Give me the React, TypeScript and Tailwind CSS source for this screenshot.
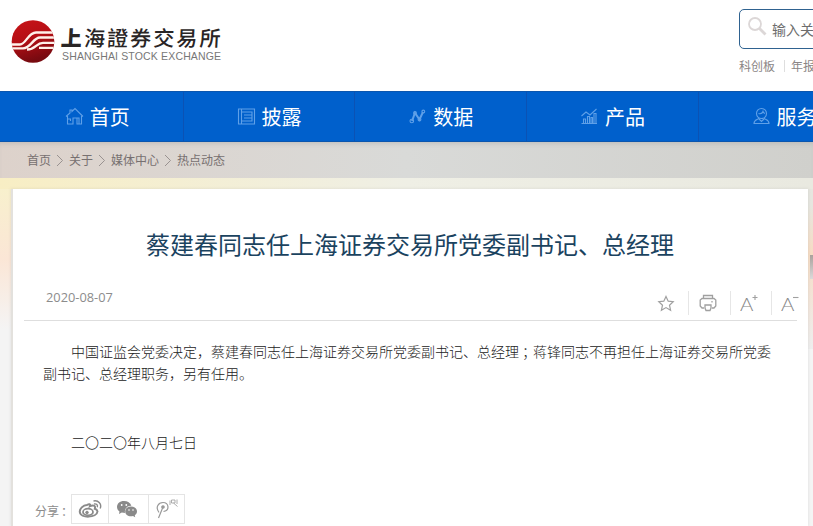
import type { ReactNode } from 'react'

const NAV_ITEMS: { id: string; label: string; icon: ReactNode }[] = [
  {
    id: 'home',
    label: '首页',
    icon: (
      <path d="M1 9.5 L5 6 V3 H7 V4.5 L10 1.5 L18 9.5 M2.5 9 V17 H8 V11 H12 V17 H16.5 V9 M2.5 12 H5.5 V14 M12 11 H14 V17" />
    ),
  },
  {
    id: 'disclosure',
    label: '披露',
    icon: (
      <path d="M1.5 2 H17.5 V17 H1.5 Z M4.5 2 V17 M4.5 5 H15 V14 H4.5 M7 8 H15 M7 11 H15" />
    ),
  },
  {
    id: 'data',
    label: '数据',
    icon: (
      <>
        <path d="M4 14 L7 6 L11.5 12.5 L15 5" strokeWidth="2" />
        <circle cx="3.8" cy="14" r="1.8" />
        <circle cx="7" cy="6" r="1.4" />
        <circle cx="11.5" cy="12.5" r="1.4" />
        <circle cx="15.3" cy="4.5" r="1.4" />
      </>
    ),
  },
  {
    id: 'product',
    label: '产品',
    icon: (
      <path d="M1.5 9 L6 5 L10 8 L16.5 2 M1.5 16.5 H17 M3.5 16 V12 H5.5 V16 M7.5 16 V9.5 H9.5 V16 M11 16 V10.5 H12.5 V16 M14 16 V6.5 H16 V16" />
    ),
  },
  {
    id: 'service',
    label: '服务',
    icon: (
      <>
        <circle cx="9.5" cy="6.5" r="5" />
        <path d="M6.5 6.5 C8.5 7 10.5 6 11 4.5 C11.5 6 12 6.3 13 6.5" />
        <path d="M7 11 C6 13 2 12.5 2 16.5 H17 C17 12.5 13 13 12 11 M7 12 L9.5 14.5 L12 12" />
      </>
    ),
  },
]

const CRUMBS = ['首页', '关于', '媒体中心', '热点动态']

function Logo() {
  return (
    <div className="flex pt-[19px] pl-[11px]">
      <svg width="44" height="45" viewBox="0 0 44 45">
        <defs>
          <linearGradient id="ball" x1="0" y1="0" x2="0.3" y2="1">
            <stop offset="0" stopColor="#c81418" />
            <stop offset="0.5" stopColor="#b50f15" />
            <stop offset="1" stopColor="#780a10" />
          </linearGradient>
          <clipPath id="ballClip">
            <circle cx="22" cy="22.5" r="21.3" />
          </clipPath>
        </defs>
        <circle cx="22" cy="22.5" r="21.3" fill="url(#ball)" />
        <g clipPath="url(#ballClip)" fill="none" stroke="#fff1ea" strokeWidth="2.3">
          <path d="M0 25.5 H9 C15 25.5 17 13.5 25 13.5 H44" />
          <path d="M0 29.3 H12 C20 29.3 22 18.5 29 18.5 H44" />
          <path d="M16 30.5 C25 30.5 25 23.8 32 23.8 H44" />
          <path d="M28 28.8 H44" />
        </g>
      </svg>
      <div className="ml-[6px] pt-[5px]">
        <div
          lang="zh-Hant"
          className="-skew-x-3 font-['Noto_Sans_CJK_TC',sans-serif] text-[21px] leading-[26px] font-medium tracking-[2.1px] whitespace-nowrap text-[#292525]"
        >
          <span className="font-black">上</span>海證券交易所
        </div>
        <div className="ml-px font-['Liberation_Sans',sans-serif] text-[10.5px] leading-[13px] tracking-[0.16px] whitespace-nowrap text-[#777]">
          SHANGHAI STOCK EXCHANGE
        </div>
      </div>
    </div>
  )
}

function Header() {
  return (
    <header className="flex h-[91px] justify-between bg-white">
      <Logo />
      <div className="w-[74px] shrink-0 overflow-hidden pt-[9px]">
        <div className="flex h-10 w-[220px] items-center rounded-[5px] border border-[#2f6290] pl-[7px]">
          <svg width="21" height="22" viewBox="0 0 21 22" className="mb-1" fill="none" stroke="#dcd7d7">
            <circle cx="8" cy="8" r="6" strokeWidth="1.8" />
            <path d="M12.5 12.5 L18.5 18.5" strokeWidth="2.8" />
          </svg>
          <span className="ml-1 text-sm whitespace-nowrap text-[#6d6d6d]">输入关键字</span>
        </div>
        <div className="mt-2 flex h-[18px] w-[200px] items-center text-xs text-[#8c8686]">
          <span>科创板</span>
          <span className="mr-[6px] ml-[9px] h-3 w-px bg-[#dedede]" />
          <span>年报</span>
        </div>
      </div>
    </header>
  )
}

function NavBar() {
  return (
    <nav className="flex h-[51px] overflow-hidden border-y border-[#0b56ae] bg-[#0060cc] pl-[12px]">
      {NAV_ITEMS.map((item) => (
        <a
          key={item.id}
          className="flex w-[171.7px] shrink-0 items-center justify-center gap-[6px] border-r border-[#0b52b4] text-xl text-white"
        >
          <svg width="19" height="19" viewBox="0 0 19 19" fill="none" stroke="#5fa0e8" strokeWidth="1.1">
            {item.icon}
          </svg>
          <span className="pt-px">{item.label}</span>
        </a>
      ))}
    </nav>
  )
}

function Breadcrumb() {
  return (
    <div className="flex h-9 items-center bg-linear-to-r from-[#ddd2cb] via-[#d9dad8] to-[#d0d0cc] pl-[27px] text-xs text-[#777070] shadow-[inset_0_4px_5px_-3px_#aaa9]">
      {CRUMBS.map((crumb, i) => (
        <span key={crumb} className="flex items-center">
          {i > 0 && (
            <svg width="8" height="13" viewBox="0 0 8 13" className="mx-[5px]" fill="none" stroke="#999290">
              <path d="M1 1 L6.5 6.5 L1 12" />
            </svg>
          )}
          {crumb}
        </span>
      ))}
    </div>
  )
}

function FontSizeIcon({ sign }: { sign: string }) {
  return (
    <span className="relative flex h-[18px] w-[18px] items-end">
      <span className="origin-left scale-x-120 font-['Lato',sans-serif] text-[17px] leading-[15px] font-light text-[#858585]">
        A
      </span>
      <svg
        width="18"
        height="18"
        viewBox="0 0 18 18"
        className="absolute inset-0"
        fill="none"
        stroke="currentColor"
        strokeWidth="1.1"
      >
        <path d={sign} />
      </svg>
    </span>
  )
}

function ArticleTools() {
  return (
    <div className="flex items-center text-[#a0a0a0]">
      <svg width="18" height="17" viewBox="0 0 18 17" fill="none" stroke="currentColor" strokeWidth="1.2">
        <path d="M9 1.5 L11.2 6.2 L16.2 6.7 L12.5 10.2 L13.6 15.3 L9 12.6 L4.4 15.3 L5.5 10.2 L1.8 6.7 L6.8 6.2 Z" />
      </svg>
      <span className="mr-[10px] ml-[13px] h-6 w-px bg-[#e6e6e6]" />
      <svg width="18" height="18" viewBox="0 0 18 18" fill="none" stroke="currentColor" strokeWidth="1.3">
        <path d="M4.5 4.5 V1.5 H13.5 V4.5 M5 14 H3 L1.2 12 V6 L3 4.5 H15 L16.8 6 V12 L15 14 H13 M13 7 V8.5" />
        <path d="M6 11 H12 V14 L11 16.5 H7 L6 14 Z" />
      </svg>
      <span className="mr-[9px] ml-[13px] h-6 w-px bg-[#e6e6e6]" />
      <FontSizeIcon sign="M15 1 V6 M12.5 3.5 H17.5" />
      <span className="mr-[9px] ml-[13px] h-6 w-px bg-[#e6e6e6]" />
      <FontSizeIcon sign="M12 3.5 H17.5" />
    </div>
  )
}

function ShareBar() {
  return (
    <div className="flex items-end pl-[22px]">
      <span className="pb-[5px] text-xs text-[#8c8c8c]">
        分享<span className="relative left-[2px]">：</span>
      </span>
      <div className="flex h-[30px] divide-x divide-[#e4e4e4] border border-[#e4e4e4]">
        <span className="flex w-[37px] items-center justify-center">
          <svg width="24" height="20" viewBox="0 0 24 20" fill="none" stroke="#8a8a8a">
            <path
              d="M9 6 C5 6 1.5 10 1.8 13 C2.2 19.5 19 19 19.5 12.5 C19.5 10.8 18 10.2 16.8 9.8 C18 6 14.5 6 12 7.2 C12.8 5 11 4.8 9 6 Z"
              strokeWidth="2"
            />
            <ellipse cx="10" cy="13" rx="5" ry="3.3" strokeWidth="1.8" />
            <circle cx="9" cy="13.5" r="1.3" fill="#8a8a8a" />
            <path d="M16 5 C18.5 4.5 20 6 19.3 8.3" strokeWidth="1.4" />
            <path d="M15.5 2 C20.5 1 24 5 22.2 9.5" strokeWidth="1.4" />
          </svg>
        </span>
        <span className="flex w-[40px] items-center justify-center pr-1">
          <svg width="22" height="19" viewBox="0 0 22 19" fill="#8a8a8a">
            <path d="M8 1 C3.7 1 1 3.6 1 7 C1 9 2 10.5 3.5 11.6 L3 14 L5.8 12.6 L9 13 C8 8 12 5.5 15.4 5.7 C14.5 2.7 11.5 1 8 1 Z" />
            <path d="M15 6.5 C11.5 6.5 9.2 8.7 9.2 11.4 C9.2 15 13 17.1 17 16 L19.2 17.3 L18.8 15.1 C20.3 14.1 21 12.8 21 11.4 C21 8.7 18.5 6.5 15 6.5 Z" />
            <g fill="#fff">
              <circle cx="5.7" cy="5" r="0.9" />
              <circle cx="10.3" cy="5" r="0.9" />
              <circle cx="13" cy="10" r="0.8" />
              <circle cx="17" cy="10" r="0.8" />
            </g>
          </svg>
        </span>
        <span className="flex w-[35px] items-center justify-center">
          <svg width="24" height="22" viewBox="0 0 24 22" fill="none" stroke="#999" strokeWidth="1.2">
            <path d="M4 14.5 C0 9 3.5 4.5 8 4.5 C14 4.5 15 12.5 8.5 13.5 M8 9 L3.5 20" />
            <circle cx="8" cy="9" r="1.2" fill="#999" />
            <path d="M15 2.5 V7 M16.5 2 H20 V5 H16.5 Z M22 1.5 V6 M18.5 5 L22.5 8.5" strokeWidth="0.8" />
          </svg>
        </span>
      </div>
    </div>
  )
}

function Article() {
  return (
    <article className="flex h-[337px] w-[797px] flex-col border-x-2 border-[#e3e1dd] border-r-white bg-white shadow-[0_0_3px_#8883]">
      <h1 className="mt-[37px] ml-[133px] text-2xl leading-9 whitespace-nowrap text-[#1b435f]">
        蔡建春同志任上海证券交易所党委副书记、总经理
      </h1>
      <div className="mr-[9px] ml-[11px] flex h-[59px] justify-between border-b border-[#dedede]">
        <time className="mt-[25px] ml-[22px] font-['Open_Sans',sans-serif] text-[12.8px] leading-5 text-[#8c8c8c]">
          2020-08-07
        </time>
        <div className="-mr-[2px] pt-[29px]">
          <ArticleTools />
        </div>
      </div>
      <div className="mt-[19px] ml-[30px] w-[730px] text-sm leading-[22px] font-light text-[#222]">
        <p className="indent-[28px]">
          中国证监会党委决定，蔡建春同志任上海证券交易所党委副书记、总经理
          <span className="relative left-[3px]">；</span>
          蒋锋同志不再担任上海证券交易所党委副书记、总经理职务，另有任用。
        </p>
        <p className="mt-[47px] indent-[28px]">二〇二〇年八月七日</p>
      </div>
      <div className="mt-[41px]">
        <ShareBar />
      </div>
    </article>
  )
}

export default function App() {
  return (
    <div
      lang="zh-CN"
      className="flex h-[526px] w-[813px] flex-col overflow-hidden font-['Noto_Sans_CJK_SC',sans-serif]"
    >
      <Header />
      <NavBar />
      <Breadcrumb />
      <main className="relative flex-1 bg-[#f4f4f4] pt-[11px] pl-[11px]">
        {/* Banner photo showing around the card */}
        <div className="absolute inset-x-0 top-0 h-[11px] bg-linear-to-r from-[#f8eec4] via-[#efefe5] to-[#e9e9e0]" />
        <div className="absolute top-[11px] left-0 h-[140px] w-[11px] bg-linear-to-b from-[#f8f0cd] via-[#fbe6d6] to-[#f4f4f4]" />
        <div className="absolute top-[11px] right-0 h-[160px] w-[5px] bg-linear-to-b from-[#e6e6df] from-10% via-[#f6dcc4] via-40% to-[#eeeeee]" />
        <div className="absolute top-[77px] right-0 h-[24px] w-[3px] bg-linear-to-b from-[#aaa29d] to-[#dcdada]" />
        <div className="relative">
          <Article />
        </div>
      </main>
    </div>
  )
}
